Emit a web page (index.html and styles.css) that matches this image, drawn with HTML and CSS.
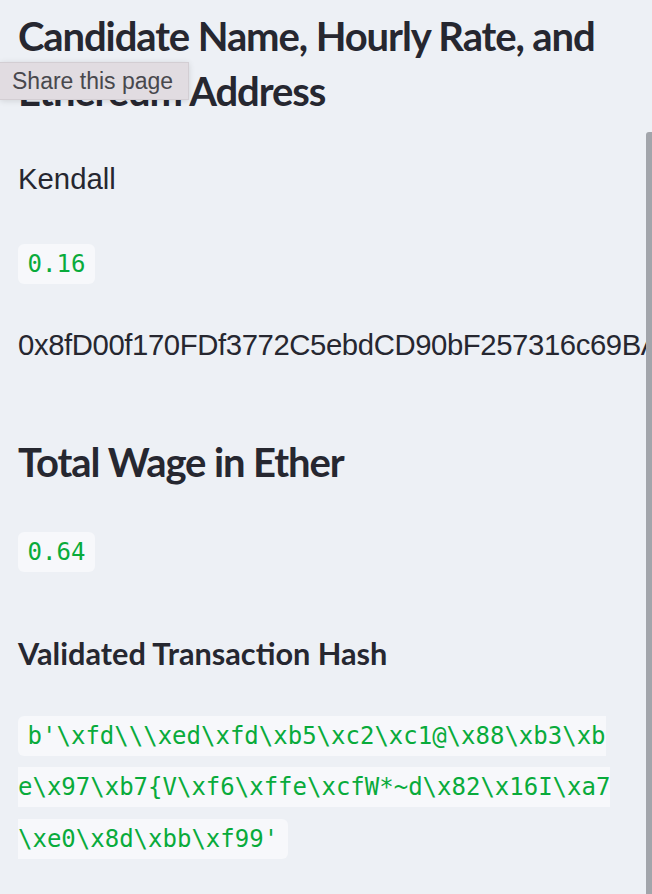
FILE: index.html
```html
<!DOCTYPE html>
<html lang="en">
<head>
<meta charset="utf-8">
<title>Candidate</title>
<link rel="stylesheet" href="styles.css">
</head>
<body>
<main class="content">
  <h2 class="header header-first">Candidate Name, Hourly Rate, and Ethereum Address</h2>
  <p class="text">Kendall</p>
  <p class="text"><code class="code">0.16</code></p>
  <p class="text address">0x8fD00f170FDf3772C5ebdCD90bF257316c69BA</p>
  <h2 class="header header-second">Total Wage in Ether</h2>
  <p class="text"><code class="code">0.64</code></p>
  <h3 class="subheader">Validated Transaction Hash</h3>
  <p class="text hash"><code class="code">b'\xfd\\\xed\xfd\xb5\xc2\xc1@\x88\xb3\xbe\x97\xb7{V\xf6\xffe\xcfW*~d\x82\x16I\xa7\xe0\x8d\xbb\xf99'</code></p>
</main>
<div class="tooltip">Share this page</div>
<div class="scrollbar"></div>
</body>
</html>
```

FILE: styles.css
```css
html, body {
  margin: 0;
  padding: 0;
  background: #edf0f5;
  overflow: hidden;
}

body {
  width: 652px;
  height: 894px;
  position: relative;
  font-family: "Liberation Sans", Arial, sans-serif;
  color: #262730;
}

.content {
  width: 596px;
  padding: 8.6px 0 0 18px;
  display: flex;
  flex-direction: column;
  gap: 32px;
}

.header {
  font-family: "Lato", "Liberation Sans", sans-serif;
  font-weight: 700;
  font-size: 40px;
  letter-spacing: -1.1px;
  line-height: 55px;
  margin: 0 0 2px 0;
  color: #262730;
}

.header-second {
  margin-top: 33px;
}

.subheader {
  font-family: "Lato", "Liberation Sans", sans-serif;
  font-weight: 700;
  font-size: 30.7px;
  line-height: 36.8px;
  margin: 29px 0 3px 0;
  color: #262730;
}

.text {
  margin: 0;
  font-size: 29.3px;
  line-height: 51.2px;
}

.address {
  white-space: nowrap;
  letter-spacing: -0.4px;
}

.code {
  font-family: "DejaVu Sans Mono", monospace;
  font-size: 24px;
  line-height: 1;
  color: #09ab3b;
  background: #f7f8fb;
  padding: 0.25em 0.4em;
  border-radius: 6px;
}

.hash {
  word-break: break-all;
}

.tooltip {
  position: absolute;
  left: 0;
  top: 62px;
  width: 176px;
  height: 36px;
  padding-left: 12px;
  box-sizing: content-box;
  background: #e1dce1;
  border: 1px solid #d3ced3;
  border-left: none;
  box-shadow: 0 1px 6px rgba(0, 0, 0, 0.12);
  font-family: "Liberation Sans", Arial, sans-serif;
  font-size: 23px;
  line-height: 36px;
  color: #48484d;
}

.scrollbar {
  position: absolute;
  left: 646px;
  top: 132px;
  width: 6px;
  height: 762px;
  background: #a2a5ab;
  border-radius: 3px 0 0 0;
}
```
